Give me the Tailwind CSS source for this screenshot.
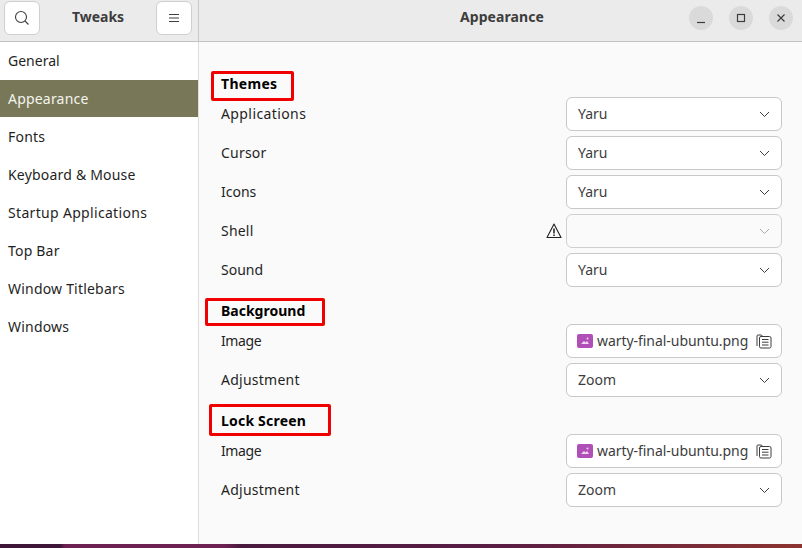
<!DOCTYPE html>
<html lang="en">
<head>
    <meta charset="UTF-8">
    <title>Tweaks - Appearance</title>
    <script src="https://cdn.jsdelivr.net/npm/@tailwindcss/browser@4"></script>
</head>
<body class="w-[802px] h-[548px] overflow-hidden flex flex-col bg-white text-[#1f1f1f] font-['Noto_Sans',sans-serif] text-[14px]">

    <!-- title bar -->
    <div class="h-[42px] flex bg-[#ebebeb] border-b border-[#c2c2c2]">
        <div class="w-[199px] shrink-0 flex items-center justify-between pl-1 pr-[6px] pb-[6px] border-r border-[#c9c9c9]">
            <button class="w-[36px] h-[34px] flex items-center justify-center bg-white border border-[#cfcfcf] rounded-md">
                <svg width="16" height="16" viewBox="0 0 16 16" fill="none" stroke="#3d3d3d" stroke-width="1.1"><circle cx="7" cy="7" r="5.5"/><path d="M11 11L14.5 14.5"/></svg>
            </button>
            <span class="font-bold text-[#3d3d3d] pb-[2px]">Tweaks</span>
            <button class="w-[36px] h-[34px] flex items-center justify-center bg-white border border-[#cfcfcf] rounded-md">
                <svg width="12" height="10" viewBox="0 0 12 10" fill="none" stroke="#3d3d3d" stroke-width="1"><path d="M1 1.5h10M1 5h10M1 8.5h10"/></svg>
            </button>
        </div>
        <div class="flex-1 relative flex items-center justify-center pl-[3px] pb-[8px]">
            <span class="font-bold text-[#3d3d3d] tracking-[0.1px]">Appearance</span>
            <div class="absolute right-[9px] top-[6px] flex gap-4">
                <button class="w-6 h-6 rounded-full bg-[#dadada] flex items-center justify-center">
                    <svg width="12" height="12" viewBox="0 0 12 12" fill="none" stroke="#3d3d3d" stroke-width="1.2"><path d="M2 10.5h8"/></svg>
                </button>
                <button class="w-6 h-6 rounded-full bg-[#dadada] flex items-center justify-center">
                    <svg width="12" height="12" viewBox="0 0 12 12" fill="none" stroke="#3d3d3d" stroke-width="1.2"><rect x="2.5" y="2.5" width="7" height="7"/></svg>
                </button>
                <button class="w-6 h-6 rounded-full bg-[#dadada] flex items-center justify-center">
                    <svg width="12" height="12" viewBox="0 0 12 12" fill="none" stroke="#3d3d3d" stroke-width="1.2"><path d="M2.5 2.5l7 7M9.5 2.5l-7 7"/></svg>
                </button>
            </div>
        </div>
    </div>

    <div class="flex-1 flex min-h-0">
        <!-- sidebar -->
        <div class="w-[199px] shrink-0 bg-white border-r border-[#dcdcdc] tracking-[0.2px]">
            <div class="h-[38px] flex items-center pl-2 pb-[2px] tracking-normal">General</div>
            <div class="h-[37px] mb-px flex items-center pl-2 pb-[1px] bg-[#787859] text-[#f4f4ee]">Appearance</div>
            <div class="h-[38px] flex items-center pl-2 pb-[2px]">Fonts</div>
            <div class="h-[38px] flex items-center pl-2 pb-[2px]">Keyboard &amp; Mouse</div>
            <div class="h-[38px] flex items-center pl-2 pb-[2px] tracking-[0.32px]">Startup Applications</div>
            <div class="h-[38px] flex items-center pl-2 pb-[2px]">Top Bar</div>
            <div class="h-[38px] flex items-center pl-2 pb-[2px]">Window Titlebars</div>
            <div class="h-[38px] flex items-center pl-2 pb-[2px]">Windows</div>
        </div>

        <!-- content -->
        <div class="flex-1 bg-[#fafafa] pt-[29px] pl-[22px] pr-[20px] flex flex-col gap-[11px]">
            <section>
                <div class="relative h-[26px] flex items-center pb-[2px] font-bold text-black tracking-[0.3px]">Themes
                    <span class="absolute left-[-10px] top-0 w-[83px] h-[30px] border-[3px] border-[#f00000] rounded-[2px]"></span>
                </div>
                <div class="flex flex-col gap-[5px]">
                    <div class="h-[34px] flex items-center justify-between">
                        <span class="pb-[2px] tracking-[0.4px]">Applications</span>
                        <div class="w-[216px] h-[34px] flex items-center justify-between pl-[11px] pr-[11px] bg-white border border-[#c8c8c8] rounded-md text-[#3d3d3d]">
                            <span class="pb-[2px]">Yaru</span>
                            <svg width="11" height="7" viewBox="0 0 11 7" fill="none" stroke="#3d3d3d"><path d="M1 1l4.5 4.5L10 1"/></svg>
                        </div>
                    </div>
                    <div class="h-[34px] flex items-center justify-between">
                        <span class="pb-[2px] tracking-[0.2px]">Cursor</span>
                        <div class="w-[216px] h-[34px] flex items-center justify-between pl-[11px] pr-[11px] bg-white border border-[#c8c8c8] rounded-md text-[#3d3d3d]">
                            <span class="pb-[2px]">Yaru</span>
                            <svg width="11" height="7" viewBox="0 0 11 7" fill="none" stroke="#3d3d3d"><path d="M1 1l4.5 4.5L10 1"/></svg>
                        </div>
                    </div>
                    <div class="h-[34px] flex items-center justify-between">
                        <span class="pb-[2px]">Icons</span>
                        <div class="w-[216px] h-[34px] flex items-center justify-between pl-[11px] pr-[11px] bg-white border border-[#c8c8c8] rounded-md text-[#3d3d3d]">
                            <span class="pb-[2px]">Yaru</span>
                            <svg width="11" height="7" viewBox="0 0 11 7" fill="none" stroke="#3d3d3d"><path d="M1 1l4.5 4.5L10 1"/></svg>
                        </div>
                    </div>
                    <div class="h-[34px] flex items-center">
                        <span class="flex-1 pb-[2px] tracking-[0.2px]">Shell</span>
                        <svg class="mr-[4px]" width="16" height="16" viewBox="0 0 16 16" fill="none" stroke="#1f1f1f" stroke-width="1.1"><path d="M8 1L1 14.5h14z" stroke-linejoin="round"/><path d="M8 5.5v5" stroke-width="1.5"/><path d="M8 11.5v1.5" stroke-width="1.5"/></svg>
                        <div class="w-[216px] h-[34px] flex items-center justify-end pr-[11px] bg-[#fafafa] border border-[#d0d0d0] rounded-md">
                            <svg width="11" height="7" viewBox="0 0 11 7" fill="none" stroke="#a8a8a8"><path d="M1 1l4.5 4.5L10 1"/></svg>
                        </div>
                    </div>
                    <div class="h-[34px] flex items-center justify-between">
                        <span class="pb-[2px]">Sound</span>
                        <div class="w-[216px] h-[34px] flex items-center justify-between pl-[11px] pr-[11px] bg-white border border-[#c8c8c8] rounded-md text-[#3d3d3d]">
                            <span class="pb-[2px]">Yaru</span>
                            <svg width="11" height="7" viewBox="0 0 11 7" fill="none" stroke="#3d3d3d"><path d="M1 1l4.5 4.5L10 1"/></svg>
                        </div>
                    </div>
                </div>
            </section>

            <section>
                <div class="relative h-[26px] flex items-center pb-[2px] font-bold text-black">Background
                    <span class="absolute left-[-16px] top-0 w-[120px] h-[28px] border-[3px] border-[#f00000] rounded-[2px]"></span>
                </div>
                <div class="flex flex-col gap-[5px]">
                    <div class="h-[34px] flex items-center justify-between">
                        <span class="pb-[2px] tracking-[-0.4px]">Image</span>
                        <div class="w-[216px] h-[34px] flex items-center pl-[10px] pr-[9px] bg-white border border-[#c8c8c8] rounded-md text-[#3d3d3d]">
                            <svg class="mr-[4px] shrink-0" width="16" height="14" viewBox="0 0 16 14"><rect width="16" height="14" rx="2" fill="#b04fb8"/><path d="M4 10l3-3 1.5 1.5L10 7l2 3z" fill="#f0d8f2"/><circle cx="10.5" cy="4.5" r="1" fill="#f0d8f2"/></svg>
                            <span class="flex-1 whitespace-nowrap pb-[2px] tracking-[-0.05px]">warty-final-ubuntu.png</span>
                            <svg class="shrink-0" width="16" height="16" viewBox="0 0 16 16" fill="none" stroke="#3d3d3d"><path d="M1 13V3a1 1 0 0 1 1-1h3.5l1 1.5"/><rect x="3.5" y="3.5" width="11.5" height="11.5" rx="1.5"/><path d="M6 6.5h6.5M6 9.2h6.5M6 12h6.5"/></svg>
                        </div>
                    </div>
                    <div class="h-[34px] flex items-center justify-between">
                        <span class="pb-[2px] tracking-[0.25px]">Adjustment</span>
                        <div class="w-[216px] h-[34px] flex items-center justify-between pl-[11px] pr-[11px] bg-white border border-[#c8c8c8] rounded-md text-[#3d3d3d]">
                            <span class="pb-[2px]">Zoom</span>
                            <svg width="11" height="7" viewBox="0 0 11 7" fill="none" stroke="#3d3d3d"><path d="M1 1l4.5 4.5L10 1"/></svg>
                        </div>
                    </div>
                </div>
            </section>

            <section>
                <div class="relative h-[26px] flex items-center pb-[2px] font-bold text-black tracking-[0.2px]">Lock Screen
                    <span class="absolute left-[-12px] top-[-4px] w-[122px] h-[32px] border-[3px] border-[#f00000] rounded-[2px]"></span>
                </div>
                <div class="flex flex-col gap-[5px]">
                    <div class="h-[34px] flex items-center justify-between">
                        <span class="pb-[2px] tracking-[-0.4px]">Image</span>
                        <div class="w-[216px] h-[34px] flex items-center pl-[10px] pr-[9px] bg-white border border-[#c8c8c8] rounded-md text-[#3d3d3d]">
                            <svg class="mr-[4px] shrink-0" width="16" height="14" viewBox="0 0 16 14"><rect width="16" height="14" rx="2" fill="#b04fb8"/><path d="M4 10l3-3 1.5 1.5L10 7l2 3z" fill="#f0d8f2"/><circle cx="10.5" cy="4.5" r="1" fill="#f0d8f2"/></svg>
                            <span class="flex-1 whitespace-nowrap pb-[2px] tracking-[-0.05px]">warty-final-ubuntu.png</span>
                            <svg class="shrink-0" width="16" height="16" viewBox="0 0 16 16" fill="none" stroke="#3d3d3d"><path d="M1 13V3a1 1 0 0 1 1-1h3.5l1 1.5"/><rect x="3.5" y="3.5" width="11.5" height="11.5" rx="1.5"/><path d="M6 6.5h6.5M6 9.2h6.5M6 12h6.5"/></svg>
                        </div>
                    </div>
                    <div class="h-[34px] flex items-center justify-between">
                        <span class="pb-[2px] tracking-[0.25px]">Adjustment</span>
                        <div class="w-[216px] h-[34px] flex items-center justify-between pl-[11px] pr-[11px] bg-white border border-[#c8c8c8] rounded-md text-[#3d3d3d]">
                            <span class="pb-[2px]">Zoom</span>
                            <svg width="11" height="7" viewBox="0 0 11 7" fill="none" stroke="#3d3d3d"><path d="M1 1l4.5 4.5L10 1"/></svg>
                        </div>
                    </div>
                </div>
            </section>
        </div>
    </div>

    <!-- desktop wallpaper showing under the window -->
    <div class="h-[4px] shrink-0 bg-[linear-gradient(90deg,#3d1638_0,#3d1638_60px,#6c2152_65px,#6c2152_225px,#4a1a3e_240px,#5a1d44_500px,#8c3430_100%)]"></div>
</body>
</html>
